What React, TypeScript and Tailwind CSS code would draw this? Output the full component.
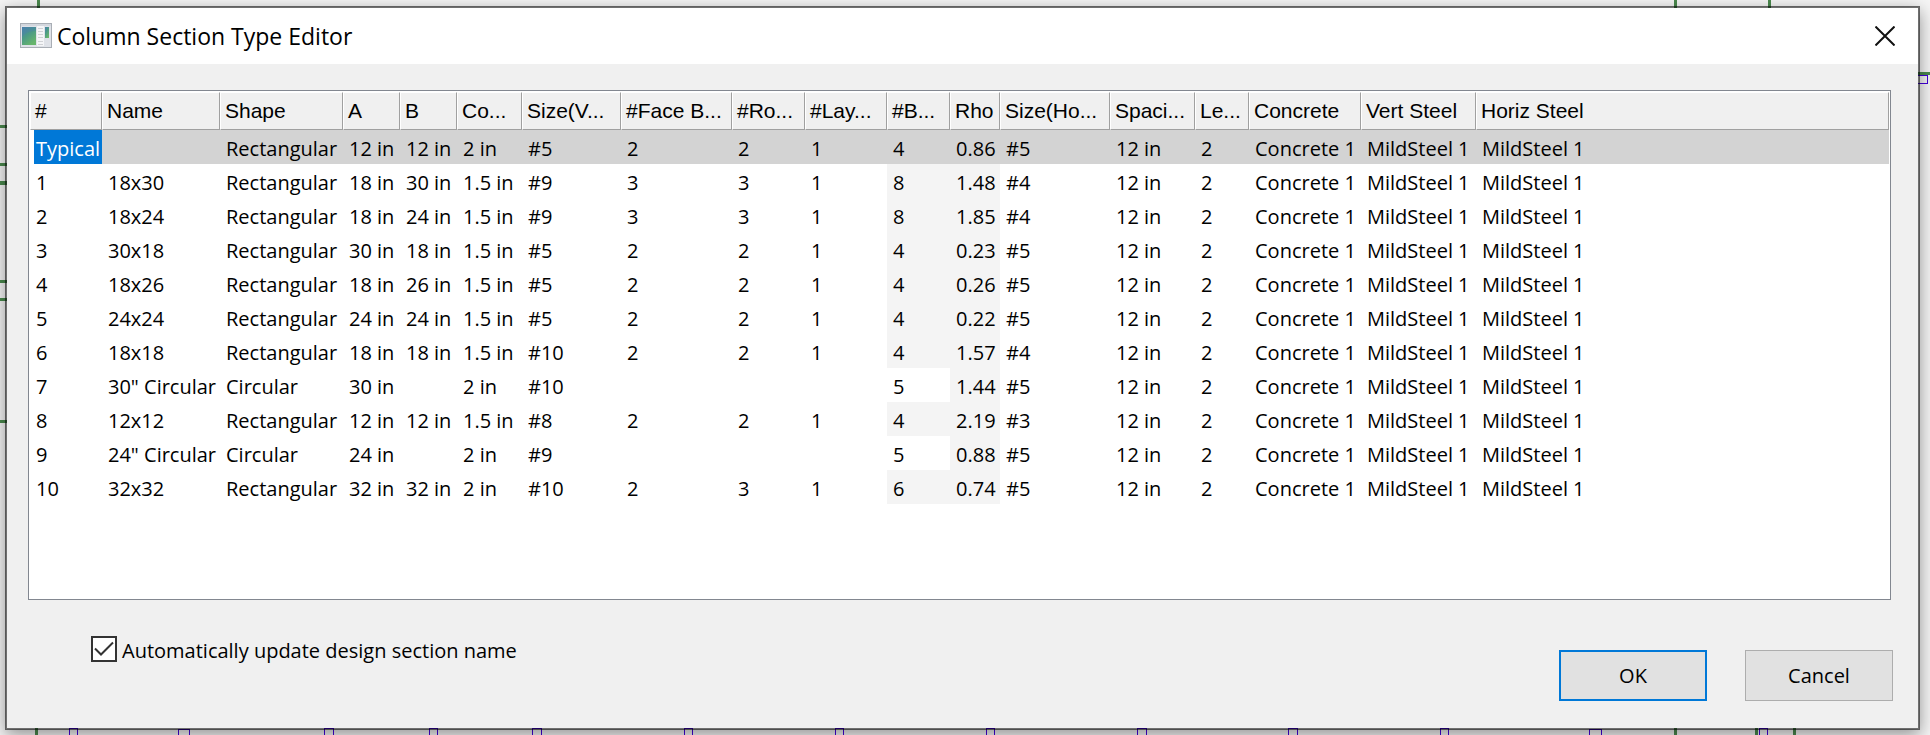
import { useState } from "react";

interface Column {
  label: string;
  width?: string;
}

const columns: Column[] = [
  { label: "#", width: "w-[72px]" },
  { label: "Name", width: "w-[118px]" },
  { label: "Shape", width: "w-[123px]" },
  { label: "A", width: "w-[57px]" },
  { label: "B", width: "w-[57px]" },
  { label: "Co...", width: "w-[65px]" },
  { label: "Size(V...", width: "w-[99px]" },
  { label: "#Face B...", width: "w-[111px]" },
  { label: "#Ro...", width: "w-[73px]" },
  { label: "#Lay...", width: "w-[82px]" },
  { label: "#B...", width: "w-[63px]" },
  { label: "Rho", width: "w-[50px]" },
  { label: "Size(Ho...", width: "w-[110px]" },
  { label: "Spaci...", width: "w-[85px]" },
  { label: "Le...", width: "w-[54px]" },
  { label: "Concrete", width: "w-[112px]" },
  { label: "Vert Steel", width: "w-[115px]" },
  { label: "Horiz Steel" },
];

const BARS_COL = 10;
const RHO_COL = 11;

const tail = ["12 in", "2", "Concrete 1", "MildSteel 1", "MildSteel 1"];

const rows: string[][] = [
  ["Typical", "", "Rectangular", "12 in", "12 in", "2 in", "#5", "2", "2", "1", "4", "0.86", "#5", ...tail],
  ["1", "18x30", "Rectangular", "18 in", "30 in", "1.5 in", "#9", "3", "3", "1", "8", "1.48", "#4", ...tail],
  ["2", "18x24", "Rectangular", "18 in", "24 in", "1.5 in", "#9", "3", "3", "1", "8", "1.85", "#4", ...tail],
  ["3", "30x18", "Rectangular", "30 in", "18 in", "1.5 in", "#5", "2", "2", "1", "4", "0.23", "#5", ...tail],
  ["4", "18x26", "Rectangular", "18 in", "26 in", "1.5 in", "#5", "2", "2", "1", "4", "0.26", "#5", ...tail],
  ["5", "24x24", "Rectangular", "24 in", "24 in", "1.5 in", "#5", "2", "2", "1", "4", "0.22", "#5", ...tail],
  ["6", "18x18", "Rectangular", "18 in", "18 in", "1.5 in", "#10", "2", "2", "1", "4", "1.57", "#4", ...tail],
  ["7", '30" Circular', "Circular", "30 in", "", "2 in", "#10", "", "", "", "5", "1.44", "#5", ...tail],
  ["8", "12x12", "Rectangular", "12 in", "12 in", "1.5 in", "#8", "2", "2", "1", "4", "2.19", "#3", ...tail],
  ["9", '24" Circular', "Circular", "24 in", "", "2 in", "#9", "", "", "", "5", "0.88", "#5", ...tail],
  ["10", "32x32", "Rectangular", "32 in", "32 in", "2 in", "#10", "2", "3", "1", "6", "0.74", "#5", ...tail],
];

// [x, y, width, height]
const gridLines = [
  [37, 0, 3, 8],
  [1674, 0, 3, 8],
  [1768, 0, 3, 8],
  [0, 125, 7, 3],
  [0, 163, 7, 3],
  [0, 181, 7, 4],
  [0, 280, 7, 3],
  [0, 298, 7, 3],
  [0, 420, 7, 3],
  [1918, 72, 12, 3],
  [35, 728, 3, 7],
  [1674, 728, 3, 7],
  [1755, 728, 3, 7],
  [1793, 728, 3, 7],
];

// [x, y, width]
const columnMarks = [
  [69, 728, 9],
  [178, 729, 12],
  [324, 728, 10],
  [429, 728, 9],
  [532, 728, 10],
  [684, 728, 9],
  [835, 728, 9],
  [986, 728, 9],
  [1137, 728, 10],
  [1288, 728, 10],
  [1440, 728, 9],
  [1589, 729, 13],
  [1759, 728, 9],
];

function PlanBackdrop() {
  return (
    <svg className="absolute inset-0 h-full w-full" aria-hidden="true" shapeRendering="crispEdges">
      {gridLines.map(([x, y, w, h]) => (
        <rect key={`${x}-${y}`} x={x} y={y} width={w} height={h} fill="#4b8a4e" />
      ))}
      {columnMarks.map(([x, y, w]) => (
        <rect key={x} x={x + 0.5} y={y + 0.5} width={w - 1} height="12" fill="none" stroke="#4400dd" />
      ))}
      <rect x="1912.5" y="75.5" width="15" height="8" fill="none" stroke="#4400dd" />
    </svg>
  );
}

function AppIcon() {
  return (
    <svg width="32" height="26" viewBox="0 0 32 26" aria-hidden="true">
      <defs>
        <linearGradient id="pane" x1="0" y1="0" x2="0.6" y2="1">
          <stop offset="0" stopColor="#4a80ac" />
          <stop offset="0.5" stopColor="#4b9a86" />
          <stop offset="1" stopColor="#67b56c" />
        </linearGradient>
      </defs>
      <rect x="0.5" y="0.5" width="31" height="24" fill="#dfe2e8" stroke="#a9aeb5" />
      <rect x="1" y="1" width="30" height="2" fill="#d3d7de" />
      <rect x="2" y="4" width="14" height="18" fill="url(#pane)" />
      <path d="M2 14c3-4 8-6 14-6V4H2z" fill="#4a7fae" opacity="0.35" />
      <rect x="17" y="3" width="7" height="20" fill="#f4f5f7" />
      <path d="M18 5.500h5M18 8.500h5M18 11.500h5M18 14.500h5M18 18.500h5M18 21.500h5" stroke="#cfd1d5" />
      <rect x="25" y="4" width="4" height="11" fill="url(#pane)" />
    </svg>
  );
}

function SectionTable() {
  return (
    <div className="h-[510px] overflow-hidden border border-[#828790] bg-white p-px">
      <table className="w-full table-fixed border-separate border-spacing-0 text-left">
        <thead>
          <tr className="h-[38px] font-['Liberation_Sans',sans-serif] text-[21px] leading-[34px]">
            {columns.map((col) => (
              <th
                key={col.label}
                scope="col"
                className={`${col.width ?? ""} border border-t-white border-r-[#a0a0a0] border-b-[#a0a0a0] border-l-white bg-[#f0f0f0] pl-1 font-normal whitespace-nowrap`}
              >
                {col.label}
              </th>
            ))}
          </tr>
        </thead>
        <tbody>
          {rows.map((row, r) => (
            <tr key={row[0]} className={r === 0 ? "bg-[#d3d3d3]" : ""}>
              {row.map((cell, c) => {
                const shaded = r > 0 && (c === RHO_COL || (c === BARS_COL && row[2] !== "Circular"));
                return (
                  <td
                    key={c}
                    className={`h-[34px] p-0 whitespace-nowrap ${shaded ? "bg-[#f4f4f4]" : ""} ${c === 0 ? "bg-white pl-1" : ""}`}
                  >
                    <div
                      className={`h-[34px] pt-1 leading-[30px] ${c === 0 ? "pl-[2px]" : "pl-[6px]"} ${c === 0 && r === 0 ? "bg-[#0078d7] text-white" : ""} ${c === RHO_COL ? "pr-[6px] text-right" : ""}`}
                    >
                      {cell}
                    </div>
                  </td>
                );
              })}
            </tr>
          ))}
        </tbody>
      </table>
    </div>
  );
}

export default function App() {
  const [autoName, setAutoName] = useState(true);

  return (
    <div className="relative flex min-h-screen flex-col overflow-hidden bg-[#f5f5f5] pt-[6px] pr-[10px] pb-[5px] pl-[5px] font-['Open_Sans',sans-serif] text-[20px] text-black">
      <PlanBackdrop />

      <div
        role="dialog"
        aria-labelledby="dialog-title"
        className="relative flex grow flex-col border-2 border-black/55 bg-[#f0f0f0] bg-clip-padding shadow-[0_5px_16px_rgba(0,0,0,0.4)]"
      >
        {/* Title bar */}
        <header className="flex h-14 items-center bg-white pr-[19px] pl-[13px]">
          <AppIcon />
          <h1 id="dialog-title" className="grow pl-[5px] text-[23px]">
            Column Section Type Editor
          </h1>
          <button type="button" aria-label="Close" className="p-1">
            <svg width="20" height="20" viewBox="0 0 20 20" fill="none" stroke="#111" strokeWidth="2">
              <path d="M0.500 0.500l19 19M19.500 0.500l-19 19" />
            </svg>
          </button>
        </header>

        <main className="pt-[26px] pr-[27px] pl-[21px]">
          <SectionTable />
        </main>

        {/* Options and actions */}
        <footer className="flex items-start justify-between pr-[25px] pl-[84px]">
          <label className="mt-9 flex items-start gap-[5px]">
            <span className="grid">
              <input
                type="checkbox"
                checked={autoName}
                onChange={(e) => setAutoName(e.target.checked)}
                className="col-start-1 row-start-1 size-[26px] appearance-none border-2 border-[#333] bg-white"
              />
              {autoName && (
                <svg
                  className="pointer-events-none col-start-1 row-start-1"
                  width="26"
                  height="26"
                  viewBox="0 0 26 26"
                  fill="none"
                  stroke="#333"
                  strokeWidth="2"
                >
                  <path d="M4 12.500l6 6L22 6.500" />
                </svg>
              )}
            </span>
            Automatically update design section name
          </label>
          <div className="mt-[50px] flex gap-[38px]">
            <button type="button" className="h-[51px] w-[148px] border-2 border-[#0078d7] bg-[#e1e1e1]">
              OK
            </button>
            <button type="button" className="h-[51px] w-[148px] border border-[#adadad] bg-[#e1e1e1]">
              Cancel
            </button>
          </div>
        </footer>
      </div>
    </div>
  );
}
